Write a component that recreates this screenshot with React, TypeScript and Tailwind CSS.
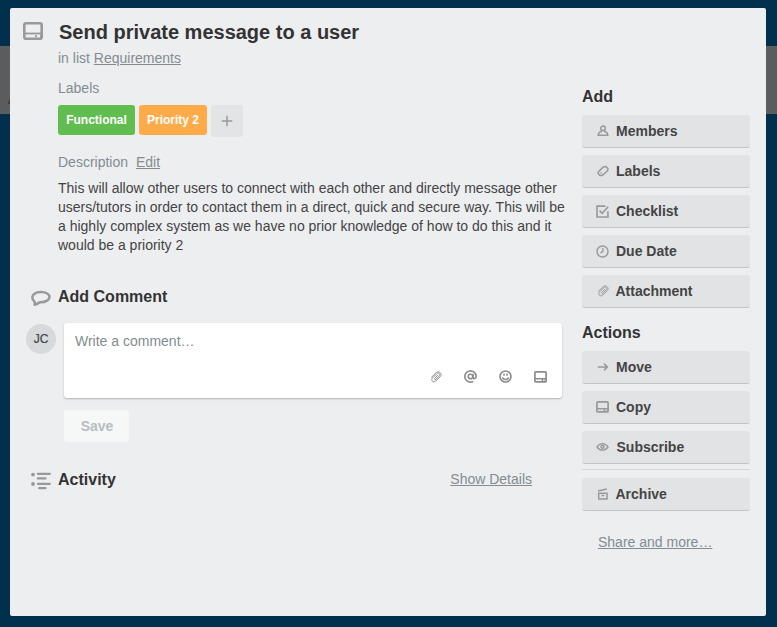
import type { ReactNode } from "react";

type IconProps = { className?: string };

function CardIcon({ className }: IconProps) {
  return (
    <svg viewBox="0 0 20 18" className={className} fill="none" stroke="currentColor" strokeWidth="2.6">
      <rect x="1.3" y="1.3" width="17.4" height="15.4" rx="1.8" />
      <path d="M1.5 11.5H18.5" strokeWidth="1.8" />
      <path d="M12 14.2h1.8M17 14.2h1.2" strokeWidth="2" />
    </svg>
  );
}

function SmallCardIcon({ className }: IconProps) {
  return (
    <svg viewBox="0 0 13 12" className={className} fill="none" stroke="currentColor" strokeWidth="1.7">
      <rect x="0.9" y="0.95" width="11.2" height="10" rx="0.8" />
      <path d="M1 7.7H12M8.4 7.6V10.6" strokeWidth="1.4" />
      <path d="M9.8 9.4h.8" strokeWidth="1.1" />
    </svg>
  );
}

function ClipIcon({ className }: IconProps) {
  return (
    <svg viewBox="0 0 12 12" className={className} fill="none" stroke="currentColor" strokeWidth="1" strokeLinecap="round" strokeLinejoin="round">
      <path d="M7.9 4.2 4.8 7.4c-.7.8.3 1.8 1.1 1L9.3 4.9c1.5-1.6-.8-3.9-2.4-2.3L2.7 6.8C.3 9.3 3.3 12.4 5.8 10L10.4 5.4C12.6 3 9 -.6 6.3 1.5L1.5 6.2" />
    </svg>
  );
}

function Stroke({ children, className }: { children: ReactNode; className?: string }) {
  return (
    <svg viewBox="0 0 12 12" className={className ?? "h-3 w-3"} fill="none" stroke="currentColor" strokeWidth="1.5">
      {children}
    </svg>
  );
}

function SideButton({ icon, label, pad = "pl-[7px]" }: { icon: ReactNode; label: string; pad?: string }) {
  return (
    <button className="flex h-[33px] w-full items-center rounded-[3px] border-b border-[#c2c5c8] bg-[#e2e3e5] pl-[14px] text-left text-[14px] leading-5 font-bold text-[#444]">
      <span className="flex w-[13px] justify-center text-[#999]">{icon}</span>
      <span className={pad}>{label}</span>
    </button>
  );
}

export default function App() {
  return (
    <div className="relative h-[627px] w-[777px] overflow-hidden bg-[#00304c] pt-2 pl-[10px] font-['Liberation_Sans',Arial,sans-serif] text-[14px] text-[#444]">
      <div className="absolute inset-x-0 top-[46px] h-[68px] bg-[#5b5c5e]">
        <span className="absolute top-[45px] left-[8px] text-[14px] leading-4 text-[#333]">A</span>
      </div>
      <main className="relative flex h-[608px] w-[756px] items-start rounded-[2px] bg-[#edeef0]">
        <section className="w-[572px] pt-3 pl-[12px]">
          <header className="flex h-6 items-center">
            <CardIcon className="mt-[-2px] mr-[16px] ml-px h-[18px] w-[20px] text-[#999]" />
            <h1 className="text-[20px] leading-6 font-bold text-[#333]">Send private message to a user</h1>
          </header>
          <div className="pl-[36px] text-[#838c91]">
            <p className="mt-[5px] leading-[18px]">
              in list <a className="underline">Requirements</a>
            </p>
            <p className="mt-[12px] leading-[18px]">Labels</p>
            <div className="mt-2 flex h-8 items-start gap-1 text-[12px] font-bold text-white">
              <span className="h-[30px] w-[77px] rounded-[3px] bg-[#61bd4f] text-center leading-[30px]">Functional</span>
              <span className="h-[30px] w-[68px] rounded-[3px] bg-[#ffab4a] text-center leading-[30px]">Priority 2</span>
              <button className="flex h-8 w-8 items-center justify-center rounded-[3px] bg-[#e2e4e6] text-[#999]">
                <Stroke className="h-3 w-3">
                  <path d="M6 .7V11.3M.7 6H11.3" />
                </Stroke>
              </button>
            </div>
            <p className="mt-4 leading-[18px]">
              Description <a className="ml-1 underline">Edit</a>
            </p>
            <p className="mt-2 leading-[19px] whitespace-nowrap text-[#444]">
              This will allow other users to connect with each other and directly message other
              <br />
              users/tutors in order to contact them in a direct, quick and secure way. This will be
              <br />
              a highly complex system as we have no prior knowledge of how to do this and it
              <br />
              would be a priority 2
            </p>
          </div>
          <div className="mt-8 flex h-5 items-center pl-[9px]">
            <svg viewBox="0 0 21 17" className="mt-[3px] mr-[7px] h-[17px] w-[20px] text-[#999]" fill="none" stroke="currentColor" strokeWidth="2.6" strokeLinejoin="round">
              <path d="M3.5 11.5C.5 8.8.8 5.2 3.8 3.4 7 1.3 13.6 1.2 17 3.2c3.3 2 3.2 5.5-.1 7.5-2.1 1.4-4.8 1.8-7.8 1.7-1.5 1.3-3.1 2.1-5.3 2.6.4-1.2.4-2.3-.3-3.5Z" />
            </svg>
            <h2 className="text-[16px] leading-5 font-bold text-[#333]">Add Comment</h2>
          </div>
          <div className="mt-[16px] flex items-start pl-1">
            <span className="mt-px mr-2 h-[30px] w-[30px] rounded-full bg-[#d6dadc] text-center text-[12px] leading-[30px] text-[#444] [-webkit-text-stroke:0.2px_#444]">
              JC
            </span>
            <div>
              <div className="flex h-[75px] w-[498px] flex-col justify-between rounded-[3px] bg-white px-[11px] pt-[9px] pb-[15px] shadow-[0_1px_2px_rgba(0,0,0,0.25)]">
                <p className="leading-[18px] text-[#838c91]">Write a comment…</p>
                <div className="flex items-center justify-end gap-[22px] pr-1 text-[#8c8c8c]">
                  <ClipIcon className="h-3 w-3" />
                  <Stroke className="h-[13px] w-[13px]">
                    <circle cx="6" cy="6" r="2.1" />
                    <path d="M8.3 3.5V6.5c0 2.1 2.9 1.8 2.9-.5A5.2 5.2 0 1 0 8.6 10.5" strokeWidth="1.5" />
                  </Stroke>
                  <Stroke className="h-[13px] w-[13px]">
                    <circle cx="6" cy="6" r="5.1" />
                    <path d="M4.6 3.3V5.4M7.4 3.3V5.4M3.3 6.9c.5 2.5 4.9 2.5 5.4 0" strokeWidth="1.4" />
                  </Stroke>
                  <SmallCardIcon className="h-[12px] w-[13px]" />
                </div>
              </div>
              <button className="mt-3 h-8 w-[65px] rounded-[3px] bg-[#f6f8f8] pl-px text-[14px] leading-8 font-bold text-[#b8bdc0]">Save</button>
            </div>
          </div>
          <div className="mt-7 flex h-5 items-center pl-[9px]">
            <svg viewBox="0 0 20 18" className="mt-[2px] mr-[7px] h-[18px] w-[20px] text-[#999]" fill="none" stroke="currentColor" strokeWidth="2.2" strokeLinecap="round">
              <path d="M6.8 1.8H18.8M6.8 6.4H14.5M6.8 11.8H18.8M8.2 16.2H14.5" />
              <circle cx="2" cy="2.6" r="1.9" fill="currentColor" stroke="none" />
              <circle cx="2" cy="12" r="1.9" fill="currentColor" stroke="none" />
            </svg>
            <h2 className="text-[16px] leading-5 font-bold text-[#333]">Activity</h2>
            <a className="mt-[-2px] mr-[50px] ml-auto text-[#838c91] underline">Show Details</a>
          </div>
        </section>
        <aside className="w-[168px] pt-[79px]">
          <h2 className="text-[16px] leading-5 font-bold text-[#333]">Add</h2>
          <div className="mt-2 flex flex-col gap-[7px]">
            <SideButton
              label="Members"
              icon={
                <Stroke>
                  <circle cx="6" cy="3.3" r="2.3" />
                  <path d="M4.5 5.2 4.3 6.4C2 7 1.3 8.4 1.2 10.3H10.8C10.7 8.4 10 7 7.7 6.4L7.5 5.2" />
                </Stroke>
              }
            />
            <SideButton
              label="Labels"
              icon={
                <Stroke>
                  <path d="M1.2 7 6.4 1.9 9 1.6 11 3.8 10.6 5.8 5 10.6 3.1 10.6 1.2 8.8Z" strokeLinejoin="round" />
                  <path d="M3.5 8.1h1.3" />
                </Stroke>
              }
            />
            <SideButton
              label="Checklist"
              icon={
                <Stroke className="h-[13px] w-[13px]">
                  <path d="M8.8 1H.9V11.1H11V5.7" />
                  <path d="M3.3 5.2 5.6 7.6 11.3 1.6" />
                </Stroke>
              }
            />
            <SideButton
              label="Due Date"
              icon={
                <Stroke className="h-[13px] w-[13px]">
                  <circle cx="6" cy="6" r="5.1" strokeWidth="1.3" />
                  <path d="M6.3 2.8V6.1L4 7.3" strokeWidth="1.2" />
                </Stroke>
              }
            />
            <SideButton label="Attachment" pad="pl-[6.5px]" icon={<ClipIcon className="h-3 w-3" />} />
          </div>
          <h2 className="mt-[15px] text-[16px] leading-5 font-bold text-[#333]">Actions</h2>
          <div className="mt-2 flex flex-col gap-[7px]">
            <SideButton
              label="Move"
              icon={
                <Stroke>
                  <path d="M.8 6H10.6M7 2.6 10.4 6 7 9.4" />
                </Stroke>
              }
            />
            <SideButton label="Copy" icon={<SmallCardIcon className="h-3 w-[13px]" />} />
            <SideButton
              label="Subscribe"
              pad="pl-[7.5px]"
              icon={
                <Stroke className="h-3 w-[13px]">
                  <path d="M.5 6C3.3 1.5 8.7 1.5 11.5 6 8.7 10.2 3.3 10.2.5 6Z" strokeWidth="1.4" />
                  <circle cx="6" cy="5.8" r="1.5" />
                </Stroke>
              }
            />
          </div>
          <hr className="my-[5px] mb-2 border-[#d3d6d9]" />
          <SideButton
            label="Archive"
            pad="pl-[6.5px]"
            icon={
              <Stroke>
                <path d="M1.7 5.3H10V11.1H1.7ZM1.1 3.1 9.8 1M4.5 7.6H7.3" />
              </Stroke>
            }
          />
          <a className="mt-[22px] ml-4 block leading-[18px] text-[#838c91] underline">Share and more…</a>
        </aside>
      </main>
    </div>
  );
}
